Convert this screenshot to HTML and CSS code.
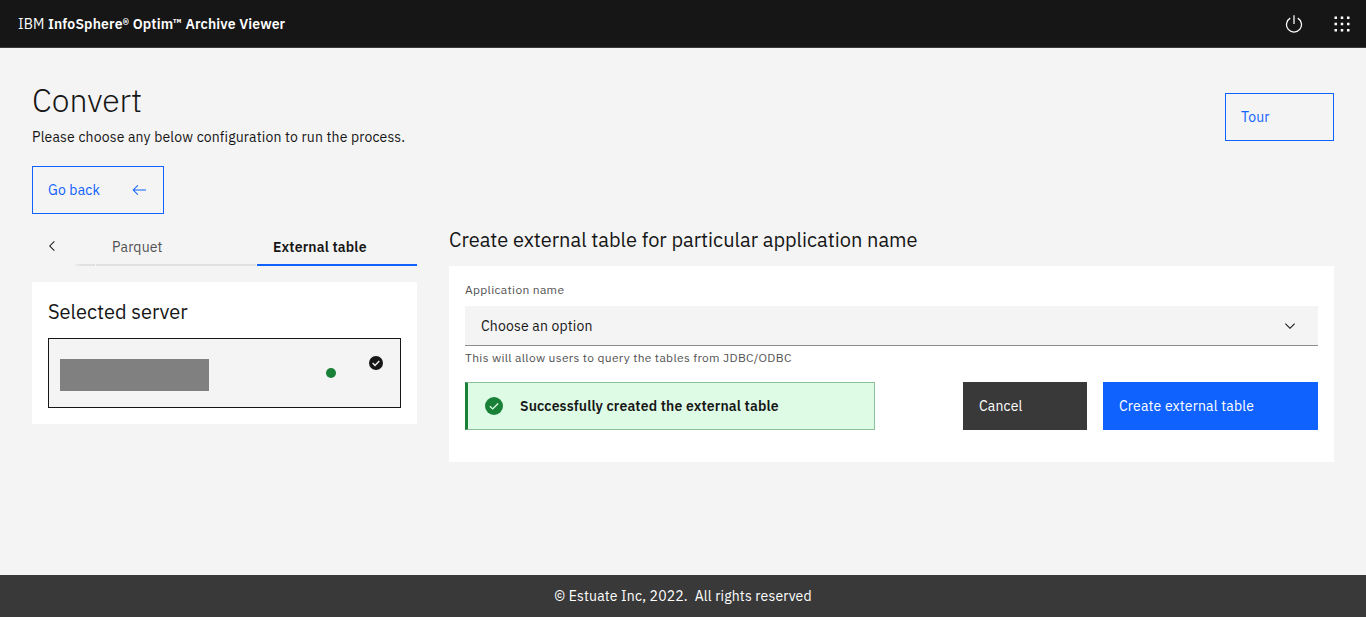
FILE: index.html
```html
<!DOCTYPE html>
<html lang="en">
<head>
<meta charset="utf-8">
<title>IBM InfoSphere Optim Archive Viewer</title>
<link rel="stylesheet" href="styles.css">
</head>
<body>
<header class="header">
  <div class="brand"><span class="brand-prefix">IBM</span> <span class="brand-name">InfoSphere® Optim™ Archive Viewer</span></div>
  <nav class="header-actions">
    <svg width="20" height="20" viewBox="0 0 32 32" fill="#fff"><path d="M22.5 5.74l-1 1.73a11 11 0 1 1-11 0l-1-1.73a13 13 0 1 0 13 0z"/><path d="M15 2h2v14h-2z"/></svg>
    <svg width="20" height="20" viewBox="0 0 32 32" fill="#fff"><path d="M14 4h4v4h-4zM4 4h4v4H4zM24 4h4v4h-4zM14 14h4v4h-4zM4 14h4v4H4zM24 14h4v4h-4zM14 24h4v4h-4zM4 24h4v4H4zM24 24h4v4h-4z"/></svg>
  </nav>
</header>
<main class="main">
  <div class="intro">
    <div>
      <h1 class="title">Convert</h1>
      <p class="subtitle">Please choose any below configuration to run the process.</p>
    </div>
    <button class="btn btn-outline btn-tour">Tour</button>
  </div>
  <button class="btn btn-outline btn-back">Go back
    <svg width="16" height="16" viewBox="0 0 16 16" fill="#0f62fe"><path d="M6.5 13l.7-.7-3.8-3.8H15v-1H3.4l3.8-3.8-.7-.7-5 5z"/></svg>
  </button>
  <div class="columns">
    <section class="left">
      <div class="tabs">
        <div class="tab-prev"><svg width="16" height="16" viewBox="0 0 16 16" fill="#161616"><path d="M5 8l5-5 .7.7L6.4 8l4.3 4.3-.7.7z"/></svg></div>
        <div class="tab-fade"></div>
        <div class="tab">Parquet</div>
        <div class="tab tab-active">External table</div>
      </div>
      <div class="card server-card">
        <h2 class="heading">Selected server</h2>
        <div class="server">
          <div class="server-name"></div>
          <div class="server-status"></div>
          <svg class="server-check" width="16" height="16" viewBox="0 0 16 16"><circle cx="8" cy="8" r="7" fill="#161616"/><path d="M4.7 8.1l2.3 2.3 4.3-4.3" fill="none" stroke="#f4f4f4" stroke-width="1.4"/></svg>
        </div>
      </div>
    </section>
    <section class="right">
      <h2 class="heading">Create external table for particular application name</h2>
      <div class="card form-card">
        <div class="small">Application name</div>
        <div class="select"><span>Choose an option</span>
          <svg width="16" height="16" viewBox="0 0 16 16" fill="#161616"><path d="M8 11L3 6l.7-.7L8 9.6l4.3-4.3.7.7z"/></svg>
        </div>
        <div class="small helper">This will allow users to query the tables from JDBC/ODBC</div>
        <div class="actions">
          <div class="notice">
            <svg width="20" height="20" viewBox="0 0 20 20"><circle cx="10" cy="10" r="9" fill="#198038"/><path d="M5.9 10.2l2.8 2.7 5.4-5.4" fill="none" stroke="#defbe6" stroke-width="1.35"/></svg>
            <span>Successfully created the external table</span>
          </div>
          <div class="buttons">
            <button class="btn btn-dark">Cancel</button>
            <button class="btn btn-primary">Create external table</button>
          </div>
        </div>
      </div>
    </section>
  </div>
</main>
<footer class="footer">© Estuate Inc, 2022.&nbsp; All rights reserved</footer>
</body>
</html>
```
FILE: styles.css
```css
* { box-sizing: border-box; }
body {
  margin: 0;
  height: 617px;
  display: flex;
  flex-direction: column;
  background: #f4f4f4;
  color: #161616;
  font-family: "IBM Plex Sans", Roboto, "Liberation Sans", sans-serif;
  font-size: 14px;
  line-height: 18px;
  letter-spacing: 0.16px;
  white-space: nowrap;
  overflow: hidden;
}
h1, h2, p { margin: 0; font-weight: 400; }
svg { flex: none; display: block; }
.header {
  height: 48px;
  flex: none;
  display: flex;
  align-items: center;
  justify-content: space-between;
  padding: 0 14px 0 18px;
  background: #161616;
  border-bottom: 1px solid #393939;
  color: #fff;
}
.brand-prefix { letter-spacing: 0.1px; }
.brand-name { font-weight: 600; }
.header-actions { display: flex; gap: 28px; }
.main { flex: 1; padding: 32px 32px 0; }
.intro { display: flex; justify-content: space-between; height: 86px; }
.title { font-size: 32px; line-height: 40px; font-weight: 300; letter-spacing: 0; }
.subtitle { margin-top: 8px; }
.btn {
  height: 48px;
  display: flex;
  align-items: center;
  justify-content: space-between;
  padding: 0 15px;
  border: 1px solid transparent;
  border-radius: 0;
  font: inherit;
  letter-spacing: inherit;
  color: #fff;
}
.btn-outline { background: transparent; border-color: #0f62fe; color: #0f62fe; }
.btn-tour { width: 109px; margin-top: 13px; }
.btn-back { width: 132px; }
.btn-back svg { margin-right: 1px; }
.btn-dark { width: 124px; background: #393939; }
.btn-primary { width: 215px; background: #0f62fe; }
.columns { display: grid; grid-template-columns: 385px 1fr; gap: 32px; margin-top: 12px; }
.tabs { display: flex; height: 40px; }
.tab-prev { width: 40px; padding: 12px 12px 0; }
.tab-fade {
  width: 23px;
  background: linear-gradient(to right, transparent 2px, #e0e0e0 8px) bottom / 100% 2px no-repeat;
}
.tab {
  width: 160px;
  margin-left: 1px;
  padding: 12px 16px 0;
  border-bottom: 2px solid #e0e0e0;
  color: #525252;
}
.tab-active { border-color: #0f62fe; color: #161616; font-weight: 600; }
.card { background: #fff; padding: 16px; }
.heading { font-size: 20px; line-height: 28px; letter-spacing: 0; }
.server-card { margin-top: 16px; height: 142px; }
.server {
  display: flex;
  height: 70px;
  margin-top: 12px;
  padding-left: 11px;
  border: 1px solid #161616;
  background: #f4f4f4;
}
.server-name { width: 149px; height: 32px; margin-top: 20px; background: #808080; }
.server-status { width: 10px; height: 10px; margin: 29px 0 0 117px; border-radius: 50%; background: #198038; }
.server-check { margin: 16px 0 0 32px; }
.form-card { height: 196px; margin-top: 12px; }
.small { font-size: 12px; line-height: 16px; letter-spacing: 0.32px; color: #525252; }
.select {
  height: 40px;
  margin-top: 8px;
  padding: 0 20px 0 16px;
  display: flex;
  align-items: center;
  justify-content: space-between;
  background: #f4f4f4;
  border-bottom: 1px solid #8d8d8d;
}
.helper { margin-top: 4px; }
.actions { display: flex; justify-content: space-between; margin-top: 16px; }
.notice {
  width: 410px;
  height: 48px;
  display: flex;
  align-items: center;
  gap: 16px;
  padding-left: 16px;
  border: 1px solid #8cc09b;
  border-left: 3px solid #198038;
  background: #defbe6;
  font-weight: 600;
}
.buttons { display: flex; gap: 16px; }
.footer {
  height: 42px;
  flex: none;
  display: flex;
  align-items: center;
  justify-content: center;
  background: #393939;
  color: #fff;
}
```
